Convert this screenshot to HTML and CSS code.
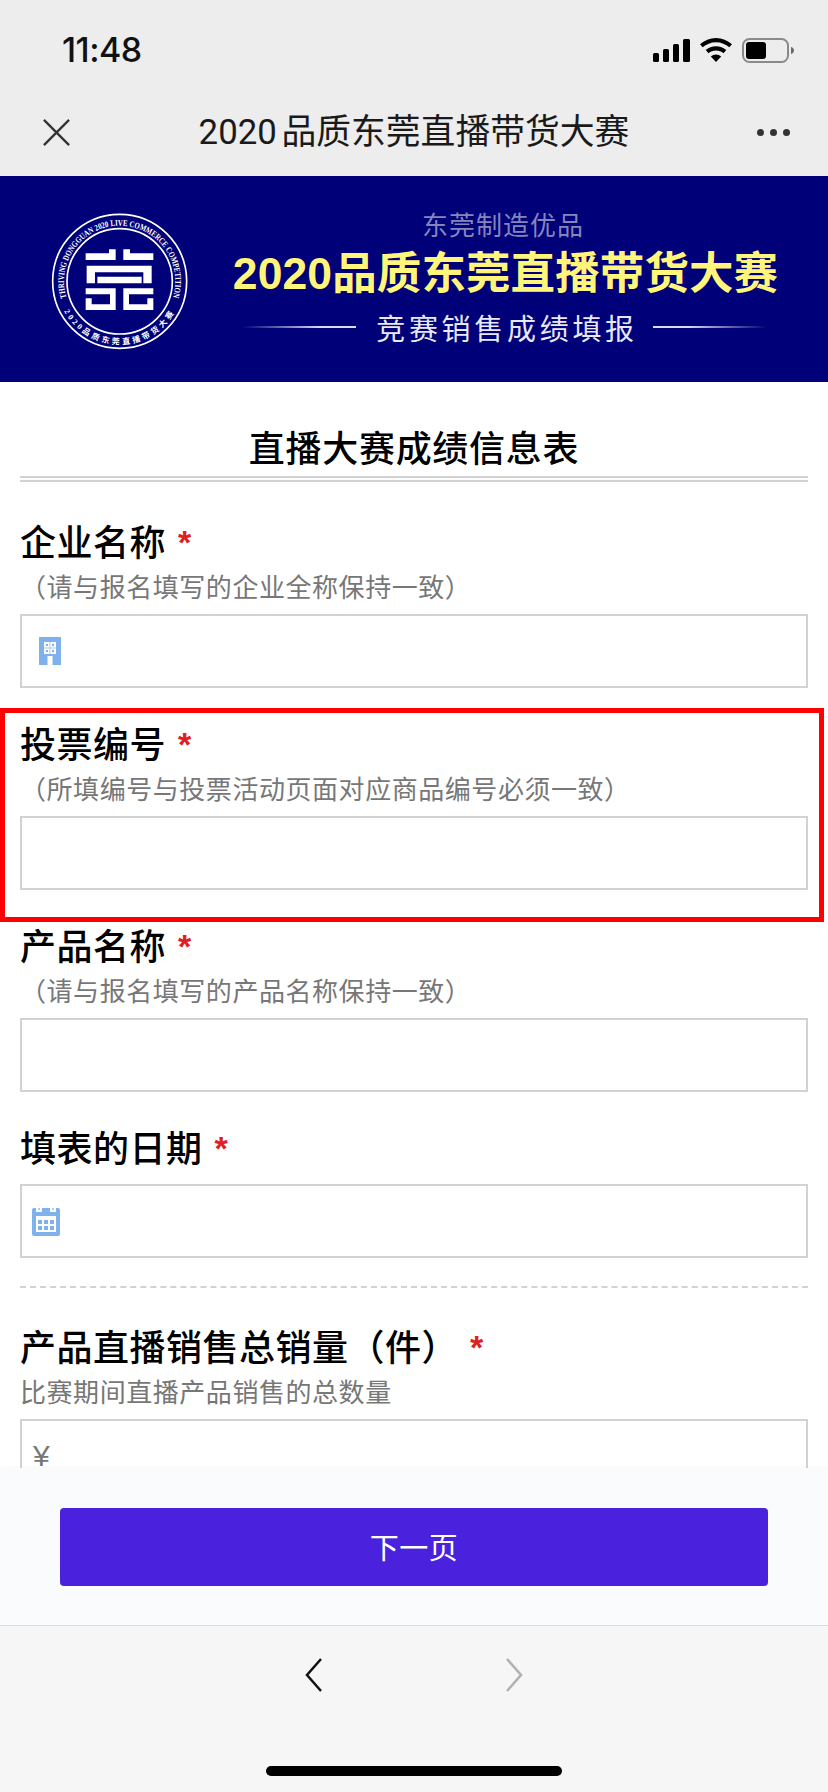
FILE: index.html
```html
<!DOCTYPE html>
<html lang="zh-CN">
<head>
<meta charset="utf-8">
<title>2020品质东莞直播带货大赛</title>
<link rel="stylesheet" href="styles.css">
</head>
<body>
<div class="app">
  <header class="chrome">
    <div class="status">
      <span class="time">11:48</span>
      <div class="status-icons">
        <svg class="signal" viewBox="0 0 37 23" aria-hidden="true"><rect x="0" y="14" width="6" height="9" rx="1.5"/><rect x="10" y="10" width="6" height="13" rx="1.5"/><rect x="20" y="5" width="6" height="18" rx="1.5"/><rect x="30" y="0" width="7" height="23" rx="1.5"/></svg>
        <svg class="wifi" viewBox="0 0 32 24" aria-hidden="true"><path d="M16 0C9.800 0 4.400 2.400 0 6.200l2.700 3.100C6.200 6.200 10.900 4.200 16 4.200s9.800 2 13.300 5.100L32 6.200C27.600 2.400 22.200 0 16 0z"/><path d="M16 8.200c-3.900 0-7.500 1.500-10.300 3.900l2.800 3.100c2-1.800 4.600-2.800 7.500-2.800s5.500 1 7.500 2.800l2.800-3.100c-2.800-2.400-6.400-3.900-10.300-3.900z"/><path d="M16 16.600c-2 0-3.800.7-5.200 2L16 24l5.200-5.400c-1.400-1.300-3.200-2-5.200-2z"/></svg>
        <svg class="battery" viewBox="0 0 53 25" aria-hidden="true"><rect x="1" y="1" width="45" height="23" rx="6.500" fill="none" stroke="#8a8a8a" stroke-width="2"/><rect x="4" y="4" width="20" height="17" rx="3" fill="#000"/><path d="M49 9c2 .6 3 2 3 3.500S51 15.400 49 16z" fill="#6a6a6a"/></svg>
      </div>
    </div>
    <div class="navbar">
      <svg class="close" viewBox="0 0 30 30" aria-hidden="true"><path d="M2 2l26 26M28 2L2 28"/></svg>
      <h1 class="nav-title">2020 品质东莞直播带货大赛</h1>
      <div class="more"><i></i><i></i><i></i></div>
    </div>
  </header>

  <main class="content">
    <section class="banner">
      <svg class="logo" viewBox="0 0 450 450" role="img" aria-label="2020品质东莞直播带货大赛">
        <defs>
          <path id="arcTop" d="M 64.300 277.800 A 167 167 0 1 1 383.700 277.800"/>
          <path id="arcBottom" d="M 57 318 A 189 189 0 0 0 391 318"/>
        </defs>
        <g fill="none" stroke="#fff">
          <circle cx="224" cy="229" r="201" stroke-width="5"/>
          <circle cx="224" cy="229" r="158" stroke-width="5"/>
        </g>
        <text class="ring-text"><textPath href="#arcTop" textLength="622" lengthAdjust="spacingAndGlyphs">THRIVING DONGGUAN 2020 LIVE COMMERCE COMPETITION</textPath></text>
        <text class="ring-text ring-cn"><textPath href="#arcBottom" textLength="400">2020品质东莞直播带货大赛</textPath></text>
        <path fill="#fff" d="M122 145h70v-12h20v32h-90zM235 133h20v12h70v20h-90zM125 182h195v53h-25v-33H150v33h-25zM157 215h133v20H157zM122 250H212V315H122V280H140V298H195V268H122ZM235 250H325V268H252V298H307V280H325V315H235Z"/>
      </svg>
      <div class="banner-text">
        <p class="banner-kicker">东莞制造优品</p>
        <p class="banner-title">2020品质东莞直播带货大赛</p>
        <div class="banner-sub">
          <span class="rule rule-left"></span>
          <span class="banner-sub-text">竞赛销售成绩填报</span>
          <span class="rule rule-right"></span>
        </div>
      </div>
    </section>

    <form class="form">
      <h2 class="form-title">直播大赛成绩信息表</h2>

      <div class="field">
        <label class="label">企业名称<span class="star">*</span></label>
        <p class="hint">（请与报名填写的企业全称保持一致）</p>
        <div class="control">
          <svg class="icon-building" viewBox="0 0 22 28" aria-hidden="true"><path fill="#7fb2ec" d="M0 0h22v28H0z"/><path fill="#fff" d="M5 5h12v12H5zM8.500 19h5v9h-5z"/><path fill="#a9ccf3" d="M5 10.500h12v1H5zM10.500 5h1v12h-1z"/><path fill="#7fb2ec" d="M7 7h2v2H7zM13 7h2v2h-2zM7 13h2v2H7zM13 13h2v2h-2z"/></svg>
          <input class="input" type="text" aria-label="企业名称">
        </div>
      </div>

      <div class="field">
        <label class="label">投票编号<span class="star">*</span></label>
        <p class="hint">（所填编号与投票活动页面对应商品编号必须一致）</p>
        <div class="control"><input class="input" type="text" aria-label="投票编号"></div>
      </div>

      <div class="field">
        <label class="label">产品名称<span class="star">*</span></label>
        <p class="hint">（请与报名填写的产品名称保持一致）</p>
        <div class="control"><input class="input" type="text" aria-label="产品名称"></div>
      </div>

      <div class="field">
        <label class="label">填表的日期<span class="star">*</span></label>
        <div class="control">
          <svg class="icon-calendar" viewBox="0 0 28 28" aria-hidden="true"><rect width="28" height="28" rx="2" fill="#7fb2ec"/><path fill="#fff" d="M4 0h6v4H4zM18 0h6v4h-6zM4 8h20v16H4z"/><path fill="#a9ccf3" d="M6 0h2v2H6zM20 0h2v2h-2z"/><path fill="#7fb2ec" d="M6 12h4v4H6zM12 12h4v4h-4zM18 12h4v4h-4zM6 18h4v4H6zM12 18h4v4h-4zM18 18h4v4h-4z"/></svg>
          <input class="input" type="text" aria-label="填表的日期">
        </div>
      </div>

      <hr class="dashed">

      <div class="field">
        <label class="label">产品直播销售总销量（件）<span class="star star-wide">*</span></label>
        <p class="hint">比赛期间直播产品销售的总数量</p>
        <div class="control control-money">
          <span class="currency">¥</span>
          <input class="input" type="text" aria-label="产品直播销售总销量">
        </div>
      </div>
    </form>

    <div class="highlight" aria-hidden="true"></div>
  </main>

  <div class="action-panel">
    <button class="next" type="button">下一页</button>
  </div>

  <footer class="browser-bar">
    <div class="browser-nav">
      <svg class="chev" viewBox="0 0 17 34" aria-hidden="true"><path d="M16 1L2 17l14 16" stroke="#111"/></svg>
      <svg class="chev" viewBox="0 0 17 34" aria-hidden="true"><path d="M1 1l14 16L1 33" stroke="#b0b0b0"/></svg>
    </div>
    <div class="home-indicator"></div>
  </footer>
</div>
</body>
</html>
```
FILE: styles.css
```css
* { box-sizing: border-box; }
html, body { margin: 0; padding: 0; }
body {
  width: 828px;
  height: 1792px;
  overflow: hidden;
  background: #fff;
  font-family: Roboto, "Noto Sans CJK SC", sans-serif;
  color: #000;
}
.app { position: relative; display: flex; flex-direction: column; width: 828px; height: 1792px; }

.chrome { flex: none; height: 176px; background: #ededed; }
.status { display: flex; justify-content: space-between; align-items: center; height: 100px; padding: 0 33px 0 62px; }
.time { font-family: Inter, sans-serif; font-size: 34px; font-weight: 500; letter-spacing: -0.5px; color: #111; line-height: 1; }
.status-icons { display: flex; align-items: center; gap: 10px; }
.signal { width: 37px; height: 23px; fill: #000; }
.wifi { width: 32px; height: 24px; fill: #000; }
.battery { width: 53px; height: 25px; }

.navbar { display: flex; align-items: center; justify-content: space-between; height: 64px; padding: 0 38px 0 42px; position: relative; }
.close { width: 29px; height: 29px; fill: none; stroke: #333; stroke-width: 2.400; }
.nav-title { position: absolute; left: 0; right: 0; top: 0; margin: 0; text-align: center; font-size: 34.800px; line-height: 64px; font-weight: 400; color: #1a1a1a; word-spacing: -4px; pointer-events: none; }
.more { display: flex; gap: 6px; }
.more i { display: block; width: 7px; height: 7px; border-radius: 50%; background: #333; }

.content { position: relative; flex: none; height: 1292px; overflow: hidden; background: #fff; }

.banner { display: flex; height: 206px; background: #000078; padding: 29px 0 0 45px; }
.logo { flex: none; width: 150px; height: 150px; }
.ring-text { font-family: "Liberation Serif", serif; font-size: 26px; font-weight: 700; fill: #fff; }
.ring-cn { font-family: "Liberation Serif", "Noto Sans CJK SC", serif; font-size: 24px; }
.banner-text { margin-left: 39px; margin-top: -29px; width: 543px; padding-top: 31px; display: flex; flex-direction: column; align-items: center; }
.banner-text p { margin: 0; white-space: nowrap; }
.banner-kicker { height: 34px; margin-right: 5px !important; font-size: 26px; line-height: 34px; letter-spacing: 1px; color: #8585bd; font-family: "Noto Sans CJK SC", sans-serif; }
.banner-title { padding-top: 6px; font-family: "Liberation Sans", "Noto Sans CJK SC", sans-serif; font-size: 44.500px; line-height: 54px; font-weight: 700; letter-spacing: 0.100px; color: #fff57a; }
.banner-sub { display: flex; align-items: center; margin-top: 8px; margin-right: 2px; width: 525px; justify-content: space-between; height: 36px; }
.banner-sub-text { margin-left: 5px; font-size: 29px; line-height: 36px; letter-spacing: 3.700px; color: #e8e8f6; font-family: "Noto Sans CJK SC", sans-serif; white-space: nowrap; }
.rule { flex: none; width: 114px; height: 2px; }
.rule-left { background: linear-gradient(90deg, rgba(255,255,255,0), #dcdcf2 70%); }
.rule-right { background: linear-gradient(90deg, #dcdcf2 30%, rgba(255,255,255,0)); }

.form { padding: 0 20px; font-family: "Noto Sans CJK SC", sans-serif; }
.form-title { margin: 0 0 36px; height: 100px; padding-top: 39px; border-bottom: 6px double #d2d2d2; text-align: center; font-size: 36px; line-height: 50px; font-weight: 500; letter-spacing: 0.700px; }
.field { margin-bottom: 32px; }
.label { display: block; height: 44px; margin-bottom: 6px; font-size: 36px; line-height: 44px; font-weight: 500; letter-spacing: 0.500px; white-space: nowrap; }
.star { margin-left: 12px; vertical-align: 2px; font-family: "Liberation Sans", sans-serif; font-weight: 700; font-size: 34px; color: #e02020; }
.hint { margin: 0 0 10px; height: 36px; font-size: 26px; line-height: 36px; letter-spacing: 0.550px; color: #777; white-space: nowrap; }
.label + .control { margin-top: 16px; }
.control { display: flex; align-items: center; height: 74px; border: 2px solid #d2d2d2; background: #fff; padding: 0 12px; }
.input { flex: 1; min-width: 0; height: 100%; border: 0; padding: 0; outline: 0; background: transparent; }
.icon-building { flex: none; width: 22px; height: 28px; margin-left: 5px; }
.icon-calendar { flex: none; width: 28px; height: 28px; margin-left: -2px; margin-top: 2px; }
.currency { margin-left: -1px; font-family: "Liberation Sans", sans-serif; font-size: 30px; color: #777; line-height: 1; }
.dashed { margin: -4px 0 35px; border: 0; border-top: 2px dashed #d2d2d2; }

.highlight { position: absolute; left: 0; top: 532px; width: 824px; height: 214px; border: 5px solid #ff0000; pointer-events: none; }

.action-panel { flex: none; height: 157px; padding: 40px 60px 0; background: #fafbfd; box-shadow: 0 -1px 3px rgba(0,0,0,.03); position: relative; }
.next { display: block; width: 100%; height: 78px; border: 0; border-radius: 4px; padding: 0 0 3px; background: #4a22dd; color: #fff; font-family: "Noto Sans CJK SC", sans-serif; font-size: 29px; letter-spacing: 0.500px; }

.browser-bar { flex: 1; display: flex; flex-direction: column; align-items: center; background: #f6f6f6; border-top: 1px solid #ddd; padding-top: 32px; }
.browser-nav { display: flex; justify-content: space-between; width: 218px; }
.chev { width: 17px; height: 34px; fill: none; stroke-width: 2.500; }
.home-indicator { width: 296px; height: 10px; margin-top: 74px; border-radius: 5px; background: #000; }
```
